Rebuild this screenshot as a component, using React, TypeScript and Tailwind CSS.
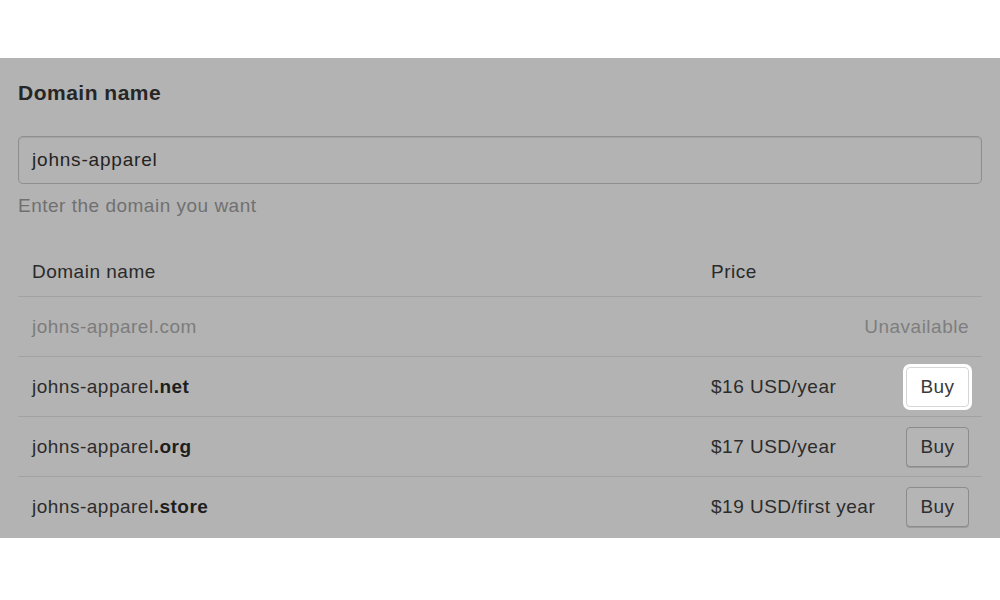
import React from "react";

// ==================== 데이터 ====================
interface DomainRow {
  tld: string;
  price: string | null;
  highlight?: boolean;
}

const BASE = "johns-apparel";

const ROWS: DomainRow[] = [
  { tld: ".com", price: null },
  { tld: ".net", price: "$16 USD/year", highlight: true },
  { tld: ".org", price: "$17 USD/year" },
  { tld: ".store", price: "$19 USD/first year" },
];

// ==================== 컴포넌트 ====================
function BuyButton({ highlight }: { highlight?: boolean }) {
  return (
    <button
      className={
        highlight
          ? "h-[40px] w-[63px] rounded-[4px] border border-[#d6d6d6] bg-white text-[19px] text-[#3a3a3a] shadow-[0_0_0_3px_#ffffff]"
          : "h-[40px] w-[63px] rounded-[4px] border border-[#8c8c8c] bg-[#b5b5b5] text-[19px] text-[#2e2e2e] shadow-[0_1px_0_#9a9a9a]"
      }
    >
      Buy
    </button>
  );
}

function Row({ row }: { row: DomainRow }) {
  const unavailable = row.price === null;
  return (
    <div className="flex h-[60px] items-center border-t border-[#a2a2a2] pl-[14px] pr-[13px] pt-[1px]">
      <div
        className={
          unavailable
            ? "flex-1 text-[19px] text-[#7c7c7c]"
            : "flex-1 text-[19px] text-[#2c2c2c]"
        }
      >
        {BASE}
        <span className={unavailable ? "" : "font-bold text-[#1e1e1e]"}>{row.tld}</span>
      </div>
      {unavailable ? (
        <div className="text-[19px] text-[#7e7e7e]">Unavailable</div>
      ) : (
        <div className="flex w-[258px] items-center justify-between">
          <span className="text-[19px] text-[#2c2c2c]">{row.price}</span>
          <BuyButton highlight={row.highlight} />
        </div>
      )}
    </div>
  );
}

export default function App() {
  return (
    <div className="h-[600px] w-[1000px] bg-white font-['Liberation_Sans',Arial,sans-serif] tracking-[0.5px]">
      <div className="h-[58px]" />
      <div className="h-[480px] bg-[#b3b3b3] px-[18px] pt-[21px]">
        <h2 className="text-[21px] leading-[28px] font-bold text-[#262626]">Domain name</h2>

        <div className="mt-[29px] flex h-[48px] items-center rounded-[5px] border border-[#8e8e8e] bg-[#b3b3b3] px-[13px] shadow-[inset_0_1px_1px_#a3a3a3]">
          <span className="text-[19px] tracking-[0.8px] text-[#242424]">johns-apparel</span>
        </div>
        <p className="mt-[10px] text-[19px] leading-[24px] text-[#707070]">Enter the domain you want</p>

        <div className="mt-[30px]">
          <div className="flex h-[48px] items-center pl-[14px] pr-[13px]">
            <div className="flex-1 text-[19px] text-[#2a2a2a]">Domain name</div>
            <div className="w-[258px] text-[19px] text-[#2a2a2a]">Price</div>
          </div>
          {ROWS.map((r) => (
            <Row key={r.tld} row={r} />
          ))}
        </div>
      </div>
    </div>
  );
}
